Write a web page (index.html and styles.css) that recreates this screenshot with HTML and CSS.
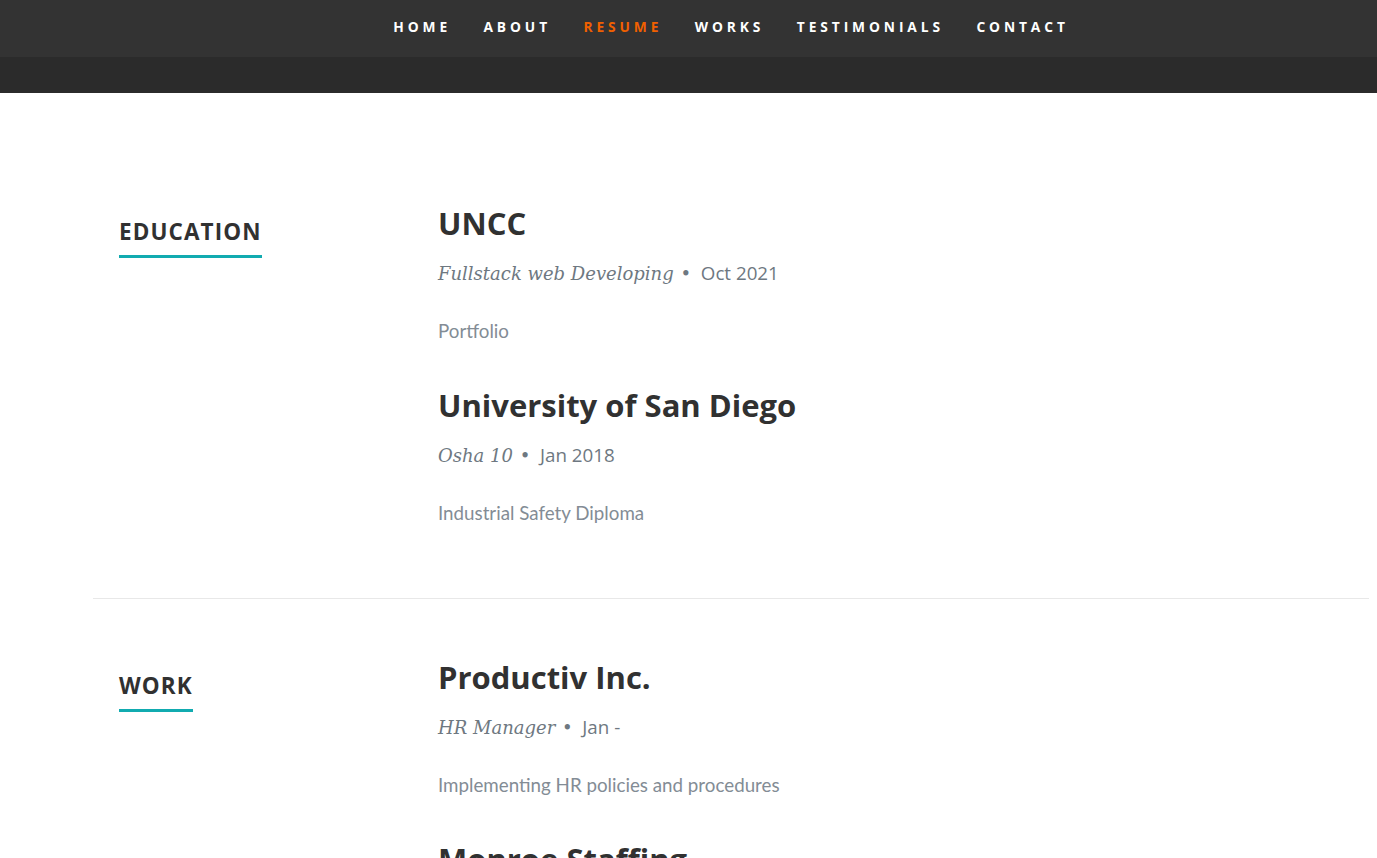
FILE: index.html
```html
<!DOCTYPE html>
<html lang="en">
<head>
<meta charset="utf-8">
<title>Resume</title>
<link rel="stylesheet" href="styles.css">
</head>
<body>
<div class="page">
  <header class="site-header">
    <nav class="nav">
      <ul class="nav-list">
        <li><a href="#home">Home</a></li>
        <li><a href="#about">About</a></li>
        <li><a class="current" href="#resume">Resume</a></li>
        <li><a href="#works">Works</a></li>
        <li><a href="#testimonials">Testimonials</a></li>
        <li><a href="#contact">Contact</a></li>
      </ul>
    </nav>
  </header>

  <section class="resume" id="resume">
    <div class="row block education">
      <div class="header-col">
        <h1 class="block-title"><span>Education</span></h1>
      </div>
      <div class="main-col">
        <div class="item">
          <h3 class="item-title">UNCC</h3>
          <p class="info">Fullstack web Developing <span class="bullet">&bull;</span> <em class="date">Oct 2021</em></p>
          <p class="desc">Portfolio</p>
        </div>
        <div class="item">
          <h3 class="item-title">University of San Diego</h3>
          <p class="info">Osha 10 <span class="bullet">&bull;</span> <em class="date">Jan 2018</em></p>
          <p class="desc">Industrial Safety Diploma</p>
        </div>
      </div>
    </div>

    <div class="row block work">
      <div class="header-col">
        <h1 class="block-title"><span>Work</span></h1>
      </div>
      <div class="main-col">
        <div class="item">
          <h3 class="item-title">Productiv Inc.</h3>
          <p class="info">HR Manager <span class="bullet">&bull;</span> <em class="date">Jan -</em></p>
          <p class="desc">Implementing HR policies and procedures</p>
        </div>
        <div class="item">
          <h3 class="item-title">Monroe Staffing</h3>
          <p class="info">Recruiter <span class="bullet">&bull;</span> <em class="date">Jan 2019</em></p>
          <p class="desc">Recruiting and staffing</p>
        </div>
      </div>
    </div>
  </section>
</div>
</body>
</html>
```

FILE: styles.css
```css
html, body {
  margin: 0;
  padding: 0;
  background: #ffffff;
}

body {
  font-family: "Open Sans", "Liberation Sans", sans-serif;
  color: #838c95;
  overflow: hidden;
}

/* Header & navigation */
.site-header {
  height: 93px;
  background: #2b2b2b;
}

.nav {
  height: 57px;
  padding-left: 85px;
  background: #333333;
  text-align: center;
}

.nav-list {
  display: inline-flex;
  margin: 0;
  padding: 0;
  list-style: none;
}

.nav-list a {
  display: block;
  padding: 0 16.25px;
  line-height: 53px;
  font-family: "Open Sans", sans-serif;
  font-weight: 700;
  font-size: 13.75px;
  letter-spacing: 3.9px;
  text-transform: uppercase;
  text-decoration: none;
  color: #ffffff;
}

.nav-list a.current {
  color: #f06000;
}

/* Resume */
.resume {
  padding-top: 111px;
}

.row {
  display: flex;
  width: 1276px;
  margin: 0 0 0 93px;
}

.header-col {
  box-sizing: border-box;
  width: 25%;
  padding: 13px 25px 0 26px;
}

.main-col {
  box-sizing: border-box;
  width: 75%;
  padding: 0 25px 0 26px;
}

.block {
  padding-bottom: 30px;
  margin-bottom: 59px;
  border-bottom: 1px solid #e8e8e8;
}

.block-title {
  margin: 0;
  font-family: "Open Sans", sans-serif;
  font-weight: 700;
  font-size: 22.5px;
  line-height: 30px;
  letter-spacing: 1.1px;
  text-transform: uppercase;
  color: #313131;
}

.block-title span {
  padding-bottom: 8px;
  border-bottom: 3px solid #11abb0;
}

.item-title {
  margin: 0;
  font-family: "Open Sans", sans-serif;
  font-weight: 700;
  font-size: 31px;
  line-height: 38px;
  color: #313131;
}

.info {
  margin: 16px 0 23px;
  font-family: "DejaVu Serif", serif;
  font-style: italic;
  font-size: 18px;
  line-height: 30px;
  color: #6e7881;
}

.bullet {
  margin: 0 4px 0 1px;
  font-style: normal;
}

.date {
  font-family: "Open Sans", sans-serif;
  font-style: normal;
  font-size: 18.75px;
}

.desc {
  margin: 0 0 37px;
  padding-top: 1px;
  font-family: Lato, sans-serif;
  font-size: 18.75px;
  line-height: 36px;
  color: #838c95;
}
```
